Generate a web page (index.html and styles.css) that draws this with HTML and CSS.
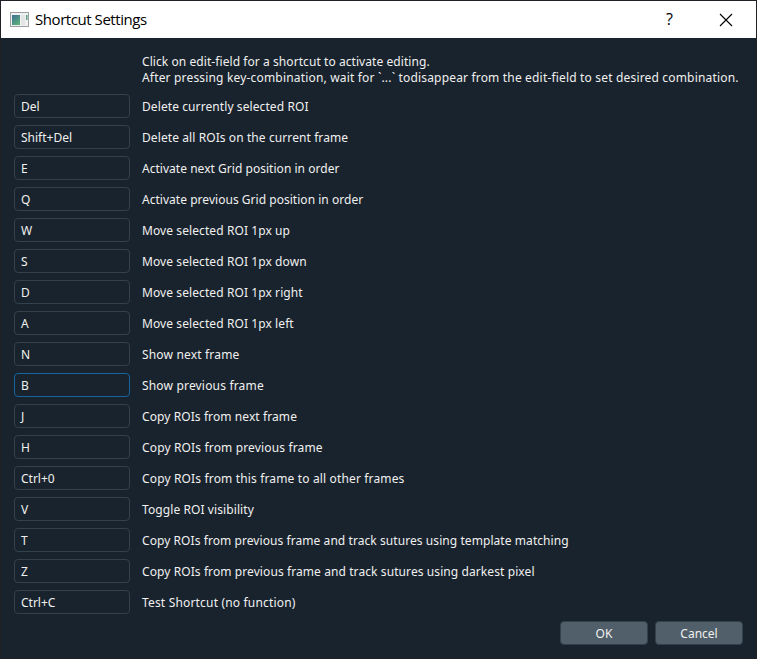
FILE: index.html
```
<!DOCTYPE html>
<html lang="en">
<head>
<meta charset="utf-8">
<title>Shortcut Settings</title>
<link rel="stylesheet" href="styles.css">
</head>
<body>
<div class="window">
  <header class="titlebar">
    <svg class="app-icon" width="19" height="16" viewBox="0 0 19 16">
      <defs><linearGradient id="g" x1="0" y1="0" x2="0.6" y2="1"><stop offset="0" stop-color="#3e6d9c"/><stop offset="1" stop-color="#58ad78"/></linearGradient></defs>
      <rect x=".5" y=".5" width="18" height="14" fill="#f1f1f1" stroke="#9a9fa3"/>
      <rect x="2" y="3" width="8" height="10" fill="url(#g)"/>
      <rect x="11" y="3" width="4" height="10" fill="#e2e4e5"/>
      <rect x="16" y="3" width="1.5" height="5" fill="#58a184"/>
    </svg>
    <h1 class="title">Shortcut Settings</h1>
    <span class="help">?</span>
    <svg class="close" width="14" height="14" viewBox="0 0 14 14"><path d="M1 1L13 13M13 1L1 13" stroke="#000" stroke-width="1.1" fill="none"/></svg>
  </header>
  <main class="content">
    <p class="intro"><span class="tight">Click on edit-field for a shortcut to activate editing.</span><br><span class="wide">After pressing key-combination, wait for `...` todisappear from the edit-field to set desired combination.</span></p>
    <div class="rows">
      <div class="row"><div class="field">Del</div><span class="label">Delete currently selected ROI</span></div>
      <div class="row"><div class="field">Shift+Del</div><span class="label">Delete all ROIs on the current frame</span></div>
      <div class="row"><div class="field">E</div><span class="label snug">Activate next Grid position in order</span></div>
      <div class="row"><div class="field">Q</div><span class="label snug">Activate previous Grid position in order</span></div>
      <div class="row"><div class="field">W</div><span class="label">Move selected ROI 1px up</span></div>
      <div class="row"><div class="field">S</div><span class="label">Move selected ROI 1px down</span></div>
      <div class="row"><div class="field">D</div><span class="label">Move selected ROI 1px right</span></div>
      <div class="row"><div class="field">A</div><span class="label">Move selected ROI 1px left</span></div>
      <div class="row"><div class="field">N</div><span class="label wide">Show next frame</span></div>
      <div class="row"><div class="field focused">B</div><span class="label wide">Show previous frame</span></div>
      <div class="row"><div class="field">J</div><span class="label">Copy ROIs from next frame</span></div>
      <div class="row"><div class="field">H</div><span class="label medium">Copy ROIs from previous frame</span></div>
      <div class="row"><div class="field">Ctrl+0</div><span class="label medium">Copy ROIs from this frame to all other frames</span></div>
      <div class="row"><div class="field">V</div><span class="label">Toggle ROI visibility</span></div>
      <div class="row"><div class="field">T</div><span class="label tight">Copy ROIs from previous frame and track sutures using template matching</span></div>
      <div class="row"><div class="field">Z</div><span class="label">Copy ROIs from previous frame and track sutures using darkest pixel</span></div>
      <div class="row"><div class="field">Ctrl+C</div><span class="label wide">Test Shortcut (no function)</span></div>
    </div>
    <footer class="actions"><button class="btn">OK</button><button class="btn">Cancel</button></footer>
  </main>
</div>
</body>
</html>
```
FILE: styles.css
```
* { box-sizing: border-box; }
body { margin: 0; font: 12px/16px "Noto Sans", sans-serif; color: #f0f0f0; }
.window { width: 757px; height: 659px; border: 1px solid #202126; background: #19232d; overflow: hidden; }
.titlebar { display: flex; align-items: center; height: 37px; padding: 0 23px 0 9px; background: #fff; color: #000; }
.app-icon { margin-right: 6px; }
.title { margin: 0; padding-bottom: 1px; flex: 1; font: 15px/20px "Open Sans", sans-serif; letter-spacing: -0.44px; }
.help { margin-right: 46px; padding-bottom: 2px; font: 16px/20px "Open Sans", sans-serif; }
.content { padding: 16px 13px 0; }
.intro { margin: 0 0 8px 128px; white-space: nowrap; }
.rows { display: grid; gap: 7px; }
.row { display: flex; align-items: center; gap: 12px; height: 24px; white-space: nowrap; }
.label { padding-top: 2px; letter-spacing: 0.09px; }
.snug { letter-spacing: 0.03px; }
.tight { letter-spacing: 0.07px; }
.medium { letter-spacing: 0.15px; }
.wide { letter-spacing: 0.175px; }
.field { width: 116px; height: 24px; padding: 0 6px; line-height: 23px; border: 1px solid #32414b; border-radius: 4px; }
.focused { border-color: #1464a0; }
.actions { display: flex; justify-content: flex-end; gap: 7px; margin-top: 7px; }
.btn { width: 88px; height: 24px; padding: 1px 0 0; font: inherit; color: inherit; background: #505f69; border: 1px solid #32414b; border-radius: 4px; }
```
